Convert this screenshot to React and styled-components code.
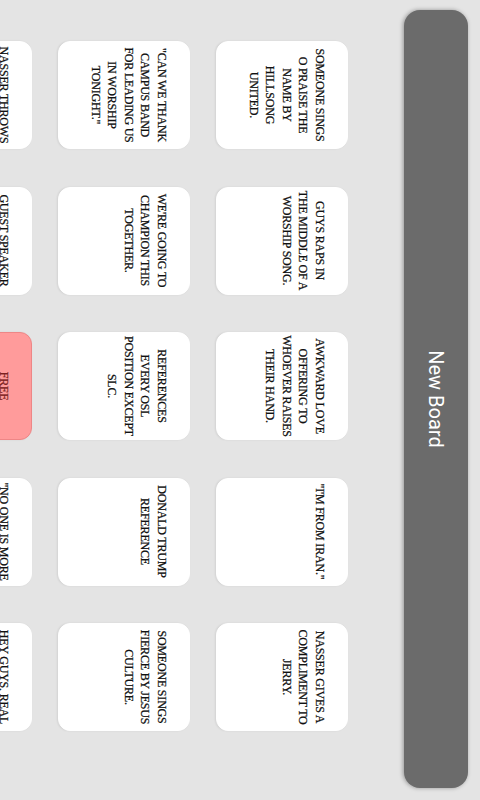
import React from 'react'
import styled, { createGlobalStyle } from "styled-components";

const GlobalStyle = createGlobalStyle`
  html, body {
    margin: 0;
    padding: 0;
    width: 480px;
    height: 800px;
    overflow: hidden;
    background-color: #e4e4e4;
  }
  #root {
    width: 480px;
    height: 800px;
  }
`;

// the app is shown in landscape on a portrait screen, so the whole board is turned
const Screen = styled.div`
  width: 800px;
  height: 480px;
  transform-origin: top left;
  transform: translateX(480px) rotate(90deg);
  background-color: #e4e4e4;
  display: flex;
  flex-direction: column;
  overflow: hidden;
`;

const NewBoardButton = styled.button`
  margin: 12px 12px 0 10px;
  height: 64px;
  flex-shrink: 0;
  border: none;
  border-radius: 16px;
  background-color: #6b6b6b;
  box-shadow: 0 1px 4px rgba(0, 0, 0, 0.35);
  color: #ffffff;
  font-family: Roboto, "Liberation Sans", sans-serif;
  font-size: 20px;
  cursor: pointer;
`;

const Grid = styled.div`
  display: grid;
  grid-template-columns: repeat(5, 108px);
  grid-auto-rows: 132px;
  column-gap: 37.5px;
  row-gap: 26px;
  padding: 56px 0 0 41px;
`;

const Card = styled.div`
  box-sizing: border-box;
  border-radius: 12px;
  padding: 19px 0 0;
  background-color: ${(p) => (p.free ? "#ff9b9b" : "#ffffff")};
  border: 1px solid ${(p) => (p.free ? "#ee8686" : "#ffffff")};
  box-shadow: 0 1px 2px rgba(0, 0, 0, 0.08);
  color: ${(p) => (p.free ? "#7a2020" : "#111111")};
  -webkit-text-stroke: 0.25px currentColor;
  font-family: "Liberation Serif", "Times New Roman", serif;
  font-size: 12px;
  letter-spacing: -0.2px;
  line-height: 16.5px;
  text-align: center;
  text-transform: uppercase;
  white-space: pre;
`;

const squares = [
  "Someone sings\nO Praise the\nname by\nHillsong\nUnited.",
  "Guys raps in\nthe middle of a\nworship song.",
  "Awkward love\noffering to\nwhoever raises\ntheir hand.",
  "\"I'm from Iran.\"",
  "Nasser gives a\ncompliment to\nJerry.",
  "\"Can we thank\ncampus band\nfor leading us\nin worship\ntonight.\"",
  "We're going to\nchampion this\ntogether.",
  "References\nevery OSL\nposition except\nSLC.",
  "Donald Trump\nreference",
  "Someone sings\nFierce by Jesus\nCulture.",
  "Nasser throws\na chair.",
  "Guest speaker\nshows up.",
  "Free",
  "\"No one is more\nexcited than me.\"",
  "Hey guys, real\ntalk.",
];

const App = () => {
  return (
    <>
      <GlobalStyle />
      <Screen>
        <NewBoardButton>New Board</NewBoardButton>
        <Grid>
          {squares.map((text, i) => (
            <Card key={i} free={text === "Free"}>
              {text}
            </Card>
          ))}
        </Grid>
      </Screen>
    </>
  )
}

export default App
